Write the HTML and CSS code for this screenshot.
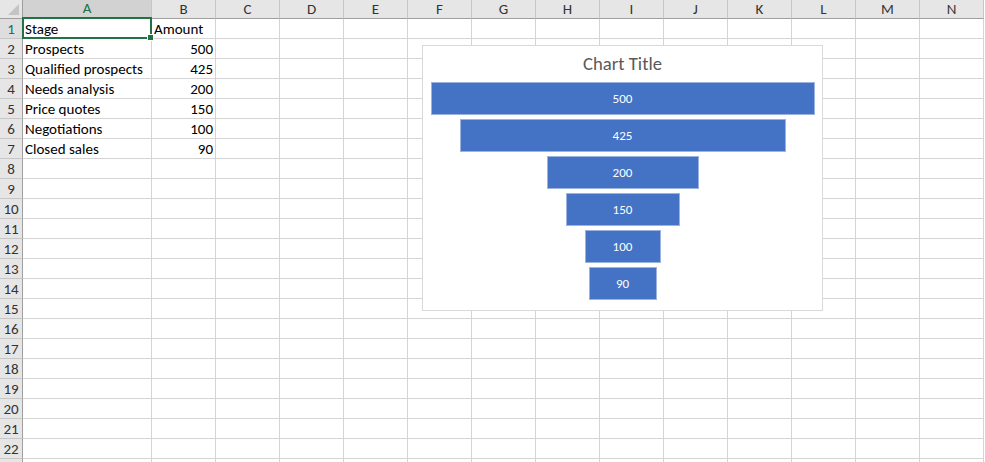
FILE: index.html
```html
<!DOCTYPE html>
<html>
<head>
<meta charset="utf-8">
<title>Sales funnel</title>
<link rel="stylesheet" href="styles.css">
</head>
<body>
<div class="book">

<div class="sheet">
<div class="ch corner"></div><div class="ch active">A</div><div class="ch">B</div><div class="ch">C</div><div class="ch">D</div><div class="ch">E</div><div class="ch">F</div><div class="ch">G</div><div class="ch">H</div><div class="ch">I</div><div class="ch">J</div><div class="ch">K</div><div class="ch">L</div><div class="ch">M</div><div class="ch">N</div>

<div class="rh active">1</div><div class="c sel">Stage</div><div class="c">Amount</div><div class="c"></div><div class="c"></div><div class="c"></div><div class="c"></div><div class="c"></div><div class="c"></div><div class="c"></div><div class="c"></div><div class="c"></div><div class="c"></div><div class="c"></div><div class="c"></div>
<div class="rh">2</div><div class="c">Prospects</div><div class="c num">500</div><div class="c"></div><div class="c"></div><div class="c"></div><div class="c"></div><div class="c"></div><div class="c"></div><div class="c"></div><div class="c"></div><div class="c"></div><div class="c"></div><div class="c"></div><div class="c"></div>
<div class="rh">3</div><div class="c">Qualified prospects</div><div class="c num">425</div><div class="c"></div><div class="c"></div><div class="c"></div><div class="c"></div><div class="c"></div><div class="c"></div><div class="c"></div><div class="c"></div><div class="c"></div><div class="c"></div><div class="c"></div><div class="c"></div>
<div class="rh">4</div><div class="c">Needs analysis</div><div class="c num">200</div><div class="c"></div><div class="c"></div><div class="c"></div><div class="c"></div><div class="c"></div><div class="c"></div><div class="c"></div><div class="c"></div><div class="c"></div><div class="c"></div><div class="c"></div><div class="c"></div>
<div class="rh">5</div><div class="c">Price quotes</div><div class="c num">150</div><div class="c"></div><div class="c"></div><div class="c"></div><div class="c"></div><div class="c"></div><div class="c"></div><div class="c"></div><div class="c"></div><div class="c"></div><div class="c"></div><div class="c"></div><div class="c"></div>
<div class="rh">6</div><div class="c">Negotiations</div><div class="c num">100</div><div class="c"></div><div class="c"></div><div class="c"></div><div class="c"></div><div class="c"></div><div class="c"></div><div class="c"></div><div class="c"></div><div class="c"></div><div class="c"></div><div class="c"></div><div class="c"></div>
<div class="rh">7</div><div class="c">Closed sales</div><div class="c num">90</div><div class="c"></div><div class="c"></div><div class="c"></div><div class="c"></div><div class="c"></div><div class="c"></div><div class="c"></div><div class="c"></div><div class="c"></div><div class="c"></div><div class="c"></div><div class="c"></div>
<div class="rh">8</div><div class="c"></div><div class="c"></div><div class="c"></div><div class="c"></div><div class="c"></div><div class="c"></div><div class="c"></div><div class="c"></div><div class="c"></div><div class="c"></div><div class="c"></div><div class="c"></div><div class="c"></div><div class="c"></div>
<div class="rh">9</div><div class="c"></div><div class="c"></div><div class="c"></div><div class="c"></div><div class="c"></div><div class="c"></div><div class="c"></div><div class="c"></div><div class="c"></div><div class="c"></div><div class="c"></div><div class="c"></div><div class="c"></div><div class="c"></div>
<div class="rh">10</div><div class="c"></div><div class="c"></div><div class="c"></div><div class="c"></div><div class="c"></div><div class="c"></div><div class="c"></div><div class="c"></div><div class="c"></div><div class="c"></div><div class="c"></div><div class="c"></div><div class="c"></div><div class="c"></div>
<div class="rh">11</div><div class="c"></div><div class="c"></div><div class="c"></div><div class="c"></div><div class="c"></div><div class="c"></div><div class="c"></div><div class="c"></div><div class="c"></div><div class="c"></div><div class="c"></div><div class="c"></div><div class="c"></div><div class="c"></div>
<div class="rh">12</div><div class="c"></div><div class="c"></div><div class="c"></div><div class="c"></div><div class="c"></div><div class="c"></div><div class="c"></div><div class="c"></div><div class="c"></div><div class="c"></div><div class="c"></div><div class="c"></div><div class="c"></div><div class="c"></div>
<div class="rh">13</div><div class="c"></div><div class="c"></div><div class="c"></div><div class="c"></div><div class="c"></div><div class="c"></div><div class="c"></div><div class="c"></div><div class="c"></div><div class="c"></div><div class="c"></div><div class="c"></div><div class="c"></div><div class="c"></div>
<div class="rh">14</div><div class="c"></div><div class="c"></div><div class="c"></div><div class="c"></div><div class="c"></div><div class="c"></div><div class="c"></div><div class="c"></div><div class="c"></div><div class="c"></div><div class="c"></div><div class="c"></div><div class="c"></div><div class="c"></div>
<div class="rh">15</div><div class="c"></div><div class="c"></div><div class="c"></div><div class="c"></div><div class="c"></div><div class="c"></div><div class="c"></div><div class="c"></div><div class="c"></div><div class="c"></div><div class="c"></div><div class="c"></div><div class="c"></div><div class="c"></div>
<div class="rh">16</div><div class="c"></div><div class="c"></div><div class="c"></div><div class="c"></div><div class="c"></div><div class="c"></div><div class="c"></div><div class="c"></div><div class="c"></div><div class="c"></div><div class="c"></div><div class="c"></div><div class="c"></div><div class="c"></div>
<div class="rh">17</div><div class="c"></div><div class="c"></div><div class="c"></div><div class="c"></div><div class="c"></div><div class="c"></div><div class="c"></div><div class="c"></div><div class="c"></div><div class="c"></div><div class="c"></div><div class="c"></div><div class="c"></div><div class="c"></div>
<div class="rh">18</div><div class="c"></div><div class="c"></div><div class="c"></div><div class="c"></div><div class="c"></div><div class="c"></div><div class="c"></div><div class="c"></div><div class="c"></div><div class="c"></div><div class="c"></div><div class="c"></div><div class="c"></div><div class="c"></div>
<div class="rh">19</div><div class="c"></div><div class="c"></div><div class="c"></div><div class="c"></div><div class="c"></div><div class="c"></div><div class="c"></div><div class="c"></div><div class="c"></div><div class="c"></div><div class="c"></div><div class="c"></div><div class="c"></div><div class="c"></div>
<div class="rh">20</div><div class="c"></div><div class="c"></div><div class="c"></div><div class="c"></div><div class="c"></div><div class="c"></div><div class="c"></div><div class="c"></div><div class="c"></div><div class="c"></div><div class="c"></div><div class="c"></div><div class="c"></div><div class="c"></div>
<div class="rh">21</div><div class="c"></div><div class="c"></div><div class="c"></div><div class="c"></div><div class="c"></div><div class="c"></div><div class="c"></div><div class="c"></div><div class="c"></div><div class="c"></div><div class="c"></div><div class="c"></div><div class="c"></div><div class="c"></div>
<div class="rh">22</div><div class="c"></div><div class="c"></div><div class="c"></div><div class="c"></div><div class="c"></div><div class="c"></div><div class="c"></div><div class="c"></div><div class="c"></div><div class="c"></div><div class="c"></div><div class="c"></div><div class="c"></div><div class="c"></div>
<div class="rh"></div><div class="c"></div><div class="c"></div><div class="c"></div><div class="c"></div><div class="c"></div><div class="c"></div><div class="c"></div><div class="c"></div><div class="c"></div><div class="c"></div><div class="c"></div><div class="c"></div><div class="c"></div><div class="c"></div>
</div>

<!-- funnel chart floats over the grid -->
<div class="chart">
  <div class="chart-title">Chart Title</div>
  <div class="funnel">
    <div class="bar" style="width: 384px">500</div>
    <div class="bar" style="width: 326px">425</div>
    <div class="bar" style="width: 152px">200</div>
    <div class="bar" style="width: 114px">150</div>
    <div class="bar" style="width: 76px">100</div>
    <div class="bar" style="width: 68px">90</div>
  </div>
</div>

</div>
</body>
</html>
```

FILE: styles.css
```css
html, body {
   margin: 0;
   padding: 0;
   background-color: white;
}

.book {
   position: relative;
   width: 985px;
   height: 462px;
   overflow: hidden;
   font-family: "Carlito", "Lato", "Liberation Sans", sans-serif;
   font-size: 15px;
   color: #000;
}

.sheet {
   display: grid;
   grid-template-columns: 23px 129px repeat(13, 64px);
   grid-template-rows: 19px;
   grid-auto-rows: 20px;
}

.ch, .rh, .c {
   box-sizing: border-box;
   white-space: nowrap;
   overflow: visible;
}

/* column headers */
.ch {
   background-color: #e6e6e6;
   border-right: 1px solid #c6c6c6;
   border-bottom: 1px solid #9f9f9f;
   color: #333;
   text-align: center;
   line-height: 18px;
}

.ch.corner {
   position: relative;
   border-right-color: #9f9f9f;
}

.ch.corner::after {
   content: "";
   position: absolute;
   right: 3px;
   bottom: 3px;
   border-style: solid;
   border-width: 0 0 11px 11px;
   border-color: transparent transparent #c4c4c4 transparent;
}

.ch.active {
   background-color: #d2d2d2;
   color: #217346;
   border-bottom: 2px solid #217346;
   line-height: 17px;
}

/* row headers */
.rh {
   background-color: #e6e6e6;
   border-right: 1px solid #9f9f9f;
   border-bottom: 1px solid #c6c6c6;
   color: #333;
   text-align: center;
   padding-top: 1px;
   line-height: 18px;
}

.rh.active {
   background-color: #dedede;
   color: #217346;
}

/* cells */
.c {
   border-right: 1px solid #d4d4d4;
   border-bottom: 1px solid #d4d4d4;
   padding: 1px 2px 0 2px;
   line-height: 18px;
}

.c.num {
   text-align: right;
}

.c.sel {
   position: relative;
}

.c.sel::before {
   content: "";
   position: absolute;
   left: -1px;
   top: -2px;
   right: -1px;
   bottom: -1px;
   border: 2px solid #217346;
}

.c.sel::after {
   content: "";
   position: absolute;
   right: -3px;
   bottom: -3px;
   width: 5px;
   height: 5px;
   background-color: #217346;
   border: 1px solid white;
}

/* chart */
.chart {
   position: absolute;
   left: 422px;
   top: 45px;
   width: 401px;
   height: 266px;
   box-sizing: border-box;
   background-color: white;
   border: 1px solid #d9d9d9;
   display: flex;
   flex-direction: column;
   align-items: center;
}

.chart-title {
   margin-top: 6px;
   height: 24px;
   line-height: 24px;
   font-size: 18.7px;
   color: #595959;
}

.funnel {
   margin-top: 6px;
   display: flex;
   flex-direction: column;
   align-items: center;
   gap: 4px;
}

.bar {
   box-sizing: border-box;
   height: 33px;
   background-color: #4472c4;
   border: 1px solid #9cb3df;
   color: white;
   font-size: 13px;
   line-height: 31px;
   text-align: center;
}
```
